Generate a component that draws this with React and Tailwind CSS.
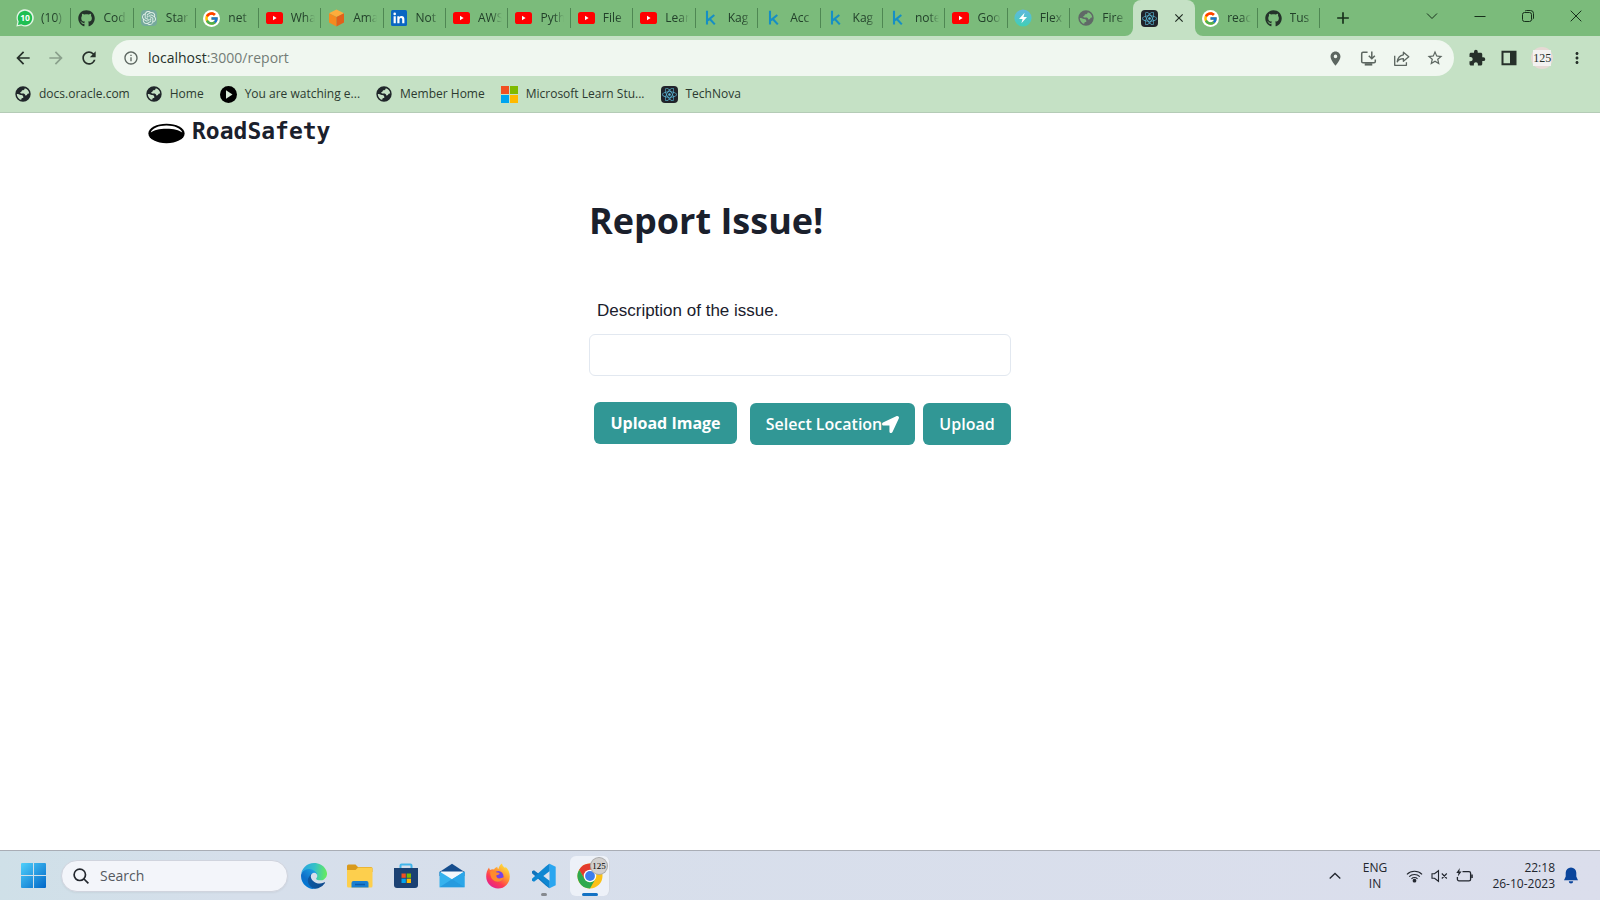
import React from "react";
import { FaGithub, FaLocationArrow, FaReact } from "react-icons/fa";
import { FcGoogle } from "react-icons/fc";
import { SiOpenai } from "react-icons/si";
import {
  MdArrowBack,
  MdArrowForward,
  MdRefresh,
  MdInfoOutline,
  MdPlace,
  MdStarBorder,
  MdExtension,
  MdMoreVert,
  MdAdd,
  MdClose,
} from "react-icons/md";

/* ---------- favicons ---------- */

function WhatsAppIcon() {
  return (
    <svg viewBox="0 0 18 18" className="size-[18px] shrink-0" aria-hidden="true">
      <path d="M.4 17.600 1.400 12.600A8.600 8.600 0 1 1 5.400 16.600Z" fill="#e4f5e6" />
      <path d="M1.900 16.100 2.700 12.600A7.200 7.200 0 1 1 5.400 15.300Z" fill="#1fbf52" />
      <text x="9" y="12.200" textAnchor="middle" fontSize="8.500" fontWeight="700" fill="#fff" fontFamily="Open Sans, sans-serif">10</text>
    </svg>
  );
}

function GoogleIcon() {
  return (
    <span className="flex size-[17px] items-center justify-center rounded-full bg-white">
      <FcGoogle className="size-[15px]" />
    </span>
  );
}

function OpenAiIcon() {
  return (
    <span className="flex size-4 items-center justify-center rounded-sm bg-[#75a99c]">
      <SiOpenai className="size-[14px] text-[#e3f0e8]" />
    </span>
  );
}

function YouTubeIcon() {
  return (
    <svg viewBox="0 0 17 12" className="h-3 w-[17px]" aria-hidden="true">
      <rect width="17" height="12" rx="2.6" fill="#f00" />
      <path d="M7 3.8v4.4L10.6 6z" fill="#fff" />
    </svg>
  );
}

function CubeIcon() {
  return (
    <svg viewBox="0 0 17 18" className="h-[18px] w-[17px]" aria-hidden="true">
      <path d="M8.5 .5 16 4.2 8.5 8 1 4.2Z" fill="#fdac3c" />
      <path d="M1 4.2 8.5 8v9.5L1 13.6Z" fill="#f58a1f" />
      <path d="M16 4.2 8.5 8v9.5L16 13.6Z" fill="#e2601a" />
    </svg>
  );
}

function LinkedInIcon() {
  return (
    <svg viewBox="0 0 16 16" className="size-4" aria-hidden="true">
      <rect width="16" height="16" rx="1.5" fill="#0a66c2" />
      <path d="M2.6 6.2h2.2v7H2.6zM3.7 2.6a1.3 1.3 0 1 1 0 2.6 1.3 1.3 0 0 1 0-2.6zM6.3 6.2h2.1v1c.4-.7 1.2-1.2 2.2-1.2 2.2 0 2.8 1.4 2.8 3.4v3.8h-2.2V9.7c0-.9-.2-1.8-1.3-1.8S8.500 8.800 8.500 9.700v3.500H6.300z" fill="#fff" />
    </svg>
  );
}

function KaggleIcon() {
  return (
    <svg viewBox="0 0 12 16" className="h-4 w-3" aria-hidden="true">
      <path d="M2 .8v13.600M9.300 5 2.700 10.400M4.600 8.800 9.800 14.400" fill="none" stroke="#168fc4" strokeWidth="2.100" />
    </svg>
  );
}

function BoltIcon() {
  return (
    <svg viewBox="0 0 18 18" className="size-[18px] shrink-0" aria-hidden="true">
      <defs>
        <linearGradient id="bolt" x1="0" y1="0" x2="0" y2="1">
          <stop offset="0" stopColor="#62b7e0" />
          <stop offset="1" stopColor="#3fd0b4" />
        </linearGradient>
      </defs>
      <circle cx="9" cy="9" r="8.600" fill="url(#bolt)" />
      <path d="M10.600 3.800 5 10h3.600L7.400 14.200 13 8H9.500Z" fill="#fff" />
    </svg>
  );
}

function ReactIcon() {
  return (
    <span className="flex size-[17px] items-center justify-center rounded-sm bg-[#20232a]">
      <FaReact className="size-[15px] text-[#58b5d3]" />
    </span>
  );
}

function Globe({ className }) {
  return (
    <svg viewBox="0 0 16 16" className={"size-4 shrink-0 " + className} aria-hidden="true">
      <path
        fillRule="evenodd"
        fill="currentColor"
        d="M8 .3a7.700 7.700 0 1 1 0 15.400A7.700 7.700 0 0 1 8 .3zM9.800 2.300C9.500 3.800 8.600 4.400 7 4.300c-.2 1.200-.6 1.700-1.900 1.900.3 1 1 1.400 2.500 1.200 1.500-.1 2.500.5 2.700 2 1.200.2 1.700-.1 2-1.100.3-.8.900-1 1.900-.7C14.100 5 12.400 3.100 9.800 2.300zM1.800 8.100c0 3 1.900 5.200 4.500 6-.2-1.200.1-1.800 1.300-2 .8-.2.900-1 .6-1.700-.5-1.200-1.500-1.100-2.500-1.300C4.700 8.900 4.100 8 3 8z"
      />
    </svg>
  );
}

const GitHubIcon = () => <FaGithub className="size-[17px] text-[#24332a]" />;
const GreyGlobe = () => <Globe className="text-[#606967]" />;
const DarkGlobe = () => <Globe className="text-[#20262a]" />;

const tabs = [
  [WhatsAppIcon, "(10)"],
  [GitHubIcon, "Cod"],
  [OpenAiIcon, "Star"],
  [GoogleIcon, "net"],
  [YouTubeIcon, "Wha"],
  [CubeIcon, "Ama"],
  [LinkedInIcon, "Not"],
  [YouTubeIcon, "AWS"],
  [YouTubeIcon, "Pyth"],
  [YouTubeIcon, "File"],
  [YouTubeIcon, "Lear"],
  [KaggleIcon, "Kag"],
  [KaggleIcon, "Acc"],
  [KaggleIcon, "Kag"],
  [KaggleIcon, "note"],
  [YouTubeIcon, "Goo"],
  [BoltIcon, "Flex"],
  [GreyGlobe, "Fire"],
  [ReactIcon, null],
  [GoogleIcon, "reac"],
  [GitHubIcon, "Tus"],
];

function Tab({ Icon, title, next }) {
  if (title === null) {
    return (
      <div role="tab" aria-selected="true" className="relative flex min-w-0 items-center justify-between rounded-t-lg bg-[#c5e1c5] px-2">
        <svg viewBox="0 0 8 8" className="absolute bottom-0 -left-2 size-2" aria-hidden="true">
          <path d="M8 0v8H0a8 8 0 0 0 8-8z" fill="#c5e1c5" />
        </svg>
        <svg viewBox="0 0 8 8" className="absolute -right-2 bottom-0 size-2" aria-hidden="true">
          <path d="M0 0v8h8a8 8 0 0 1-8-8z" fill="#c5e1c5" />
        </svg>
        <Icon />
        <button type="button" aria-label="Close tab" className="flex size-4 items-center justify-center text-[#1f2b22]">
          <MdClose className="size-[14px]" />
        </button>
      </div>
    );
  }
  const edge = next ? "border-transparent" : "border-[#4f8753]";
  return (
    <div role="tab" aria-selected="false" className="flex min-w-0 items-center">
      <div className={"flex h-5 w-full min-w-0 items-center gap-2 border-r pl-[7px] " + edge}>
        <span className="flex w-[17px] shrink-0 items-center justify-center"><Icon /></span>
        <span className="w-7 shrink-0 text-xs leading-5 whitespace-nowrap text-[#22402a] [mask-image:linear-gradient(to_right,black_14px,transparent_24px)]">
          {title}
        </span>
      </div>
    </div>
  );
}

function TabStrip() {
  return (
    <div className="flex h-9 bg-[#7bbb7b] pl-[9px]">
      <div role="tablist" className="grid min-w-0 flex-1 grid-cols-21">
        {tabs.map(([Icon, title], i) => (
          <Tab key={i} Icon={Icon} title={title} next={i + 1 < tabs.length && tabs[i + 1][1] === null} />
        ))}
      </div>
      <div className="flex w-[280px] items-center justify-between pr-[18px] pl-[11px] text-[#17301b]">
        <button type="button" aria-label="New tab" className="flex size-6 items-center justify-center">
          <MdAdd className="size-5" />
        </button>
        <div className="flex items-center gap-9 pb-1">
          <button type="button" aria-label="Search tabs">
            <svg viewBox="0 0 12 12" className="size-3" fill="none" stroke="currentColor" aria-hidden="true"><path d="m1 3.500 5 5 5-5" /></svg>
          </button>
          <button type="button" aria-label="Minimize">
            <svg viewBox="0 0 12 12" className="size-3" fill="none" stroke="currentColor" aria-hidden="true"><path d="M.5 6.500h11" /></svg>
          </button>
          <button type="button" aria-label="Restore">
            <svg viewBox="0 0 12 12" className="size-3" fill="none" stroke="currentColor" aria-hidden="true">
              <rect x=".5" y="2.500" width="9" height="9" rx="2" />
              <path d="M3 1.200C3.300.8 3.900.5 4.500.5H8.500a3 3 0 0 1 3 3V8c0 .6-.3 1-.7 1.300" />
            </svg>
          </button>
          <button type="button" aria-label="Close window">
            <svg viewBox="0 0 12 12" className="size-3" fill="none" stroke="currentColor" aria-hidden="true"><path d="m.7.7 10.600 10.600M11.300.7.7 11.300" /></svg>
          </button>
        </div>
      </div>
    </div>
  );
}

function Toolbar() {
  return (
    <div className="flex h-10 items-center pt-1 text-[#26302a]">
      <div className="flex w-28 items-center gap-[13px] pl-[13px]">
        <button type="button" aria-label="Back"><MdArrowBack className="size-5" /></button>
        <button type="button" aria-label="Forward"><MdArrowForward className="size-5 text-[#8aa08c]" /></button>
        <button type="button" aria-label="Reload"><MdRefresh className="size-5" /></button>
      </div>
      <div className="flex h-9 min-w-0 flex-1 items-center rounded-full bg-[#f0f7f0] pr-[10px] pl-[11px] text-[#5c6660]">
        <MdInfoOutline className="size-4" />
        <div className="relative ml-[9px] min-w-0 flex-1">
          <input
            aria-label="Address"
            defaultValue="localhost:3000/report"
            className="block w-full bg-transparent text-sm leading-6 text-transparent caret-[#26302a] outline-none"
          />
          <div aria-hidden="true" className="pointer-events-none absolute inset-0 text-sm leading-6 text-[#737c76]">
            <span className="text-[#26302a]">localhost</span>:3000/report
          </div>
        </div>
        <div className="flex items-center gap-4">
          <button type="button" aria-label="Location access"><MdPlace className="size-[17px]" /></button>
          <button type="button" aria-label="Install app">
            <svg viewBox="0 0 18 18" className="size-[17px]" fill="none" stroke="currentColor" strokeWidth="1.600" aria-hidden="true">
              <path d="M8 2.500H3.200a1.400 1.400 0 0 0-1.400 1.400v8.200a1.400 1.400 0 0 0 1.400 1.400h11.600a1.400 1.400 0 0 0 1.400-1.400V10M12.500 1.500v7.500M9.300 6l3.200 3.200L15.700 6" />
              <path d="M5 14h8v2.500H5z" fill="currentColor" stroke="none" />
            </svg>
          </button>
          <button type="button" aria-label="Share">
            <svg viewBox="0 0 18 18" className="size-[17px]" fill="none" stroke="currentColor" strokeWidth="1.400" strokeLinejoin="round" aria-hidden="true">
              <path d="M1.800 6v10.200h12.400V13" />
              <path d="M11 2.300 16.700 7.200 11 12V9.200c-3 0-5 1-6.500 3.300C5 8.500 7 5.600 11 5.100Z" />
            </svg>
          </button>
          <button type="button" aria-label="Bookmark this page"><MdStarBorder className="size-[18px]" /></button>
        </div>
      </div>
      <div className="flex w-[146px] items-center justify-between pr-[14px] pl-[14px]">
        <button type="button" aria-label="Extensions"><MdExtension className="size-[18px]" /></button>
        <button type="button" aria-label="Side panel">
          <svg viewBox="0 0 16 16" className="size-4" aria-hidden="true"><path d="M.5.8h15v14.400H.5zM2.500 2.800v10.400h6.500V2.800z" fill="currentColor" fillRule="evenodd" /></svg>
        </button>
        <button type="button" aria-label="Profile" className="flex size-[22px] items-center justify-center rounded-full bg-[#e6d9d4]">
          <span className="bg-[#f3f1f0] font-['Liberation_Serif',serif] text-xs leading-4">125</span>
        </button>
        <button type="button" aria-label="Menu"><MdMoreVert className="size-[18px]" /></button>
      </div>
    </div>
  );
}

function PlayIcon() {
  return (
    <svg viewBox="0 0 17 17" className="size-[17px]" aria-hidden="true">
      <circle cx="8.500" cy="8.500" r="8.500" fill="#000" />
      <path d="M6 4.300v8.400l6.500-4.200z" fill="#d7ead7" />
    </svg>
  );
}

function MicrosoftIcon() {
  return (
    <svg viewBox="0 0 17 17" className="size-[17px]" aria-hidden="true">
      <path d="M0 0h8v8H0z" fill="#f25022" />
      <path d="M9 0h8v8H9z" fill="#7fba00" />
      <path d="M0 9h8v8H0z" fill="#00a4ef" />
      <path d="M9 9h8v8H9z" fill="#ffb900" />
    </svg>
  );
}

const bookmarks = [
  [DarkGlobe, "docs.oracle.com"],
  [DarkGlobe, "Home"],
  [PlayIcon, "You are watching e..."],
  [DarkGlobe, "Member Home"],
  [MicrosoftIcon, "Microsoft Learn Stu..."],
  [ReactIcon, "TechNova"],
];

function BookmarksBar() {
  return (
    <nav aria-label="Bookmarks" className="flex h-9 items-center gap-4 pl-[15px] text-xs leading-5 text-[#2c3a30]">
      {bookmarks.map(([Icon, label], i) => (
        <a key={i} href="#" className="flex items-center gap-2 whitespace-nowrap"><Icon />{label}</a>
      ))}
    </nav>
  );
}

/* ---------- page ---------- */

function Page() {
  return (
    <div className="flex-1 bg-white text-[#1a202c]">
      <header className="flex items-center gap-[7px] pl-[148px]">
        <svg viewBox="0 0 38 22" className="mt-1 h-[22px] w-[37px]" aria-hidden="true">
          <ellipse cx="19" cy="11.500" rx="18.600" ry="10" fill="#000" />
          <path d="M2.800 10.500C4 6 11 3.200 19 3.200S34 6 35.200 10.500C32 8 26.500 6.600 19 6.600S6 8 2.800 10.500Z" fill="#fff" />
        </svg>
        <a href="#" className="font-['DejaVu_Sans_Mono',monospace] text-[23px] leading-9 font-bold">RoadSafety</a>
      </header>

      <main className="mx-auto w-[422px] pt-11">
        <h1 className="text-4xl leading-[56px] font-bold whitespace-nowrap">Report Issue!</h1>
        <form onSubmit={(e) => e.preventDefault()} className="pt-[50px]">
          <label htmlFor="description" className="block pl-2 font-['Liberation_Sans',sans-serif] text-[17px] leading-6">
            Description of the issue.
          </label>
          <input id="description" type="text" className="mt-[11px] block h-[42px] w-full rounded-md border border-[#e2e8f0] px-4 outline-none" />
          <div className="mt-[26px] flex items-start justify-between pl-[5px] text-white">
            <button type="button" className="h-[42px] w-[143px] rounded-md bg-[#319795] text-base font-bold whitespace-nowrap">Upload Image</button>
            <div className="flex gap-2 pt-px">
              <button type="button" className="flex h-[42px] w-[165px] items-center justify-center rounded-md bg-[#319795] text-base font-semibold whitespace-nowrap">
                Select Location
                <FaLocationArrow className="size-[17px]" />
              </button>
              <button type="submit" className="h-[42px] w-[88px] rounded-md bg-[#319795] text-base font-semibold">Upload</button>
            </div>
          </div>
        </form>
      </main>
    </div>
  );
}

/* ---------- taskbar ---------- */

function WindowsIcon() {
  return (
    <svg viewBox="0 0 24 24" className="size-[25px]" aria-hidden="true">
      <defs>
        <linearGradient id="win" x1="0" y1="0" x2="1" y2="1">
          <stop offset="0" stopColor="#4fd0fb" />
          <stop offset="1" stopColor="#0067c8" />
        </linearGradient>
      </defs>
      <path d="M1 0h10.500v11.500H0V1a1 1 0 0 1 1-1zM12.500 0H23a1 1 0 0 1 1 1v10.500H12.500zM0 12.500h11.500V24H1a1 1 0 0 1-1-1zM12.500 12.500H24V23a1 1 0 0 1-1 1H12.500z" fill="url(#win)" />
    </svg>
  );
}

function EdgeIcon() {
  return (
    <svg viewBox="0 0 256 256" className="size-[26px]" aria-hidden="true">
      <defs>
        <linearGradient id="edgeA" x1="63" y1="177" x2="241" y2="177" gradientUnits="userSpaceOnUse">
          <stop offset="0" stopColor="#0c59a4" />
          <stop offset="1" stopColor="#114a8b" />
        </linearGradient>
        <linearGradient id="edgeB" x1="157" y1="101" x2="46" y2="222" gradientUnits="userSpaceOnUse">
          <stop offset="0" stopColor="#1b9de2" />
          <stop offset=".7" stopColor="#0f6fc8" />
          <stop offset="1" stopColor="#0078d4" />
        </linearGradient>
        <linearGradient id="edgeC" x1="10" y1="90" x2="250" y2="110" gradientUnits="userSpaceOnUse">
          <stop offset="0" stopColor="#2aa5e0" />
          <stop offset=".5" stopColor="#35c1c8" />
          <stop offset="1" stopColor="#66eb5e" />
        </linearGradient>
      </defs>
      <path d="M231 190.500a93.700 93.700 0 0 1-10.500 4.700 101.900 101.900 0 0 1-35.900 6.500c-47.300 0-88.500-32.500-88.500-74.300a31.500 31.500 0 0 1 16.400-27.300c-42.800 1.800-53.800 46.400-53.800 72.500 0 73.900 68.100 81.400 82.800 81.400 7.900 0 19.800-2.300 27-4.600l1.300-.4a128.300 128.300 0 0 0 66.600-52.800 4 4 0 0 0-5.400-5.700z" fill="url(#edgeA)" />
      <path d="M105.700 241.400a79.200 79.200 0 0 1-22.700-21.300 80.700 80.700 0 0 1 29.500-120c3.200-1.500 8.500-4.100 15.600-4a32.400 32.400 0 0 1 25.700 13 31.900 31.900 0 0 1 6.300 18.700c0-.2 24.500-79.600-80-79.600-43.900 0-80 41.700-80 78.200a130.200 130.200 0 0 0 12.100 56 128 128 0 0 0 156.400 67 75.500 75.500 0 0 1-62.900-8z" fill="url(#edgeB)" />
      <path d="M152.300 148.900c-.9 1-3.400 2.500-3.400 5.600 0 2.600 1.700 5.200 4.800 7.300 14.400 10.100 41.600 8.700 41.700 8.700a59.600 59.600 0 0 0 30.300-8.300 61.400 61.400 0 0 0 30.400-52.900c.3-22.400-8-37.300-11.300-43.900C223.500 23.900 177.700 0 128 0A128 128 0 0 0 0 126.200c.5-36.500 36.800-66 80-66 3.500 0 23.500.3 42 10.100 16.300 8.500 24.900 18.900 30.800 29.200 6.200 10.700 7.300 24.100 7.300 29.500s-2.700 13.300-7.800 19.900z" fill="url(#edgeC)" />
    </svg>
  );
}

function FolderIcon() {
  return (
    <svg viewBox="0 0 26 24" className="h-6 w-[26px]" aria-hidden="true">
      <path d="M0 2a1.500 1.500 0 0 1 1.500-1.500h7L11 3h13a1.500 1.500 0 0 1 1.500 1.500V8H0z" fill="#d99a1c" />
      <path d="M0 6h8.500L11 3.500h13.500A1 1 0 0 1 25.500 4.500V22a1.500 1.500 0 0 1-1.500 1.500H1.500A1.500 1.500 0 0 1 0 22z" fill="#fdcf4d" />
      <path d="M4.500 23.500V19a2 2 0 0 1 2-2h13a2 2 0 0 1 2 2v4.500z" fill="#1a7fd0" />
      <path d="M8 20.500h10" stroke="#0d5ba8" strokeWidth="1.500" />
    </svg>
  );
}

function StoreIcon() {
  return (
    <svg viewBox="0 0 26 26" className="size-[26px]" aria-hidden="true">
      <path d="M7.500 6V2.500a1 1 0 0 1 1-1h9a1 1 0 0 1 1 1V6" fill="none" stroke="#42b5ea" strokeWidth="2" />
      <path d="M1 5h24V22a3 3 0 0 1-3 3H4a3 3 0 0 1-3-3z" fill="#1b4173" />
      <path d="M8.500 10.500h4.300v4.300H8.500z" fill="#f25022" />
      <path d="M13.700 10.500H18v4.300h-4.300z" fill="#7fba00" />
      <path d="M8.500 15.700h4.300V20H8.500z" fill="#00a4ef" />
      <path d="M13.700 15.700H18V20h-4.300z" fill="#ffb900" />
    </svg>
  );
}

function MailIcon() {
  return (
    <svg viewBox="0 0 26 25" className="h-[25px] w-[26px]" aria-hidden="true">
      <path d="M.5 9 13 .8 25.500 9v4H.5z" fill="#164d8d" />
      <path d="M2 8.500h22v5l-11 5-11-5z" fill="#f4f8fc" />
      <path d="M.5 8.500 13 16.300l12.500-7.800V24.200H.5z" fill="#36b2ee" />
      <path d="M13 16.300 25.500 8.500V24.200z" fill="#2ba6e8" />
      <path d="M13 16.300 .5 24.200h25z" fill="#1683cf" opacity=".5" />
    </svg>
  );
}

function FirefoxIcon() {
  return (
    <svg viewBox="0 0 26 26" className="size-[26px]" aria-hidden="true">
      <defs>
        <linearGradient id="fox" x1=".85" y1=".1" x2=".25" y2=".95">
          <stop offset="0" stopColor="#ffe03d" />
          <stop offset=".4" stopColor="#ff9330" />
          <stop offset=".7" stopColor="#ff3d4f" />
          <stop offset="1" stopColor="#e3228c" />
        </linearGradient>
      </defs>
      <path d="M24.800 13.500A11.800 11.800 0 0 1 1.200 13.800C1.200 9.800 2.200 7 4 4.500c.2 1 .5 1.800 1.100 2.500C6 6.300 7.500 6 9 6.400 9.800 5 11 4.200 12.500 3.800c-.4 1 .1 1.800.8 2.200.8-2.300 1.700-4.300 3.700-5.500.2 2 1.300 3 3.200 4.500.2-.3.300-.7.300-1.200 2.800 2.400 4.300 5.900 4.300 9.700z" fill="url(#fox)" />
      <circle cx="13.300" cy="13.200" r="5.200" fill="#7542e5" />
      <path d="M5.200 8.500c2-.8 4.600-.4 6.500 1 1.500.1 2.700.4 3 1.200-.5.900-2 1.200-3.300 1.600-.4 2 1 3.200 2.800 3.200 2 0 3-1.200 4.500-.9-1 3-3.400 4.300-6 4.200-4.500-.2-7.900-4-7.500-10.300z" fill="#ff8a2d" />
    </svg>
  );
}

function VsCodeIcon() {
  return (
    <svg viewBox="0 0 26 26" className="size-[26px]" aria-hidden="true">
      <path d="M18.500.8 8 11 3 7.200 1 8.300v2l14 12.500 3.500 2.400z" fill="#1173bb" />
      <path d="M18.500 25.200 8 15 3 18.800 1 17.700v-2L15 3.200 18.500.8z" fill="#0f87d2" />
      <path d="m18.500.8 6.200 3v18.400l-6.200 3z" fill="#2aa6f0" />
      <path d="M18.500 8.300v9.400L12.300 13z" fill="#dbe3ef" />
    </svg>
  );
}

function ChromeIcon() {
  return (
    <svg viewBox="0 0 26 26" className="size-[26px]" aria-hidden="true">
      <circle cx="13" cy="13" r="12.500" fill="#fbc116" />
      <path d="M2.170 6.750A12.500 12.500 0 0 1 23.830 6.750H13L7.500 16.100Z" fill="#e33b2e" />
      <path d="M2.170 6.750A12.500 12.500 0 0 0 13 25.500L18.400 16.100 13 19.200 7.600 16.100Z" fill="#2da94f" />
      <circle cx="13" cy="13" r="6.250" fill="#fff" />
      <circle cx="13" cy="13" r="4.900" fill="#3b7ded" />
    </svg>
  );
}

const apps = [
  ["Edge", EdgeIcon],
  ["File Explorer", FolderIcon],
  ["Microsoft Store", StoreIcon],
  ["Mail", MailIcon],
  ["Firefox", FirefoxIcon],
];

function Taskbar() {
  return (
    <footer className="flex h-[50px] items-center justify-between border-t border-[#a9adb5] bg-linear-to-r from-[#cfe0e8] via-[#d6dfeb] via-15% to-[#dbdeec] pr-[21px] pl-5">
      <div className="flex items-center">
        <button type="button" aria-label="Start" className="flex w-[26px] justify-center"><WindowsIcon /></button>
        <label className="ml-[15px] flex h-8 w-[227px] items-center gap-[11px] rounded-full border border-[#d0d4de] bg-[#f3f5fa] px-[11px] shadow-xs">
          <svg viewBox="0 0 16 16" className="size-4 shrink-0" fill="none" stroke="#23272e" strokeWidth="1.700" aria-hidden="true">
            <circle cx="6.800" cy="6.800" r="5.700" />
            <path d="m11 11 4.400 4.400" />
          </svg>
          <input type="search" aria-label="Search" placeholder="Search" className="w-full min-w-0 bg-transparent text-sm leading-5 outline-none placeholder:text-[#555960]" />
        </label>
        <div className="ml-[3px] flex items-center">
          {apps.map(([name, Icon]) => (
            <button key={name} type="button" aria-label={name} className="flex h-10 w-[46px] items-center justify-center"><Icon /></button>
          ))}
          <button type="button" aria-label="Visual Studio Code" className="relative flex h-10 w-[46px] items-center justify-center">
            <VsCodeIcon />
            <span className="absolute bottom-0 h-[3px] w-[6px] rounded-full bg-[#85898f]" />
          </button>
          <button type="button" aria-label="Google Chrome" className="relative ml-[3px] flex h-10 w-10 items-center justify-center rounded-md border-r border-[#d3d8e2] bg-[#edf1f8]">
            <ChromeIcon />
            <span className="absolute bottom-0 h-[3px] w-4 rounded-full bg-[#1271c4]" />
            <span className="absolute top-[2px] right-[2px] flex size-4 items-center justify-center rounded-full bg-[#d2d0cf] font-['Liberation_Serif',serif] text-[9px] leading-3 text-black ring-1 ring-[#a8a8a8]">125</span>
          </button>
        </div>
      </div>

      <div className="flex items-center text-xs leading-4 text-[#22262e]">
        <button type="button" aria-label="Show hidden icons">
          <svg viewBox="0 0 12 12" className="size-3" fill="none" stroke="currentColor" strokeWidth="1.300" aria-hidden="true"><path d="m.7 8.500 5.300-5 5.300 5" /></svg>
        </button>
        <div className="ml-[21px] w-[26px] text-center">ENG<br />IN</div>
        <div className="ml-[18px] flex items-center gap-2">
          <svg viewBox="0 0 18 16" className="h-4 w-[17px]" fill="none" stroke="currentColor" strokeWidth="1.200" aria-hidden="true">
            <path d="M1 6.300a11.300 11.300 0 0 1 16 0M3.400 8.700a8 8 0 0 1 11.200 0M5.800 11a4.600 4.600 0 0 1 6.400 0" />
            <circle cx="9" cy="13" r="1.400" fill="currentColor" />
          </svg>
          <svg viewBox="0 0 17 16" className="h-4 w-[17px]" fill="none" stroke="currentColor" strokeWidth="1.100" aria-hidden="true">
            <path d="M1 5.800h2.500L7.500 2.700v10.600L3.500 10.200H1zM10.800 5.500l5 5M15.800 5.500l-5 5" />
          </svg>
          <svg viewBox="0 0 17 16" className="h-4 w-[17px]" fill="none" stroke="currentColor" strokeWidth="1.300" aria-hidden="true">
            <path d="M6.500 3.700H13A1.600 1.600 0 0 1 14.600 5.300v5.900A1.600 1.600 0 0 1 13 12.800H3A1.600 1.600 0 0 1 1.400 11.200V9" />
            <path d="M16 6.500v3.500" strokeWidth="1.600" />
            <path d="M3.800 0 .3 5h2.200L1.800 8.500 5.600 3.500H3.300z" fill="currentColor" stroke="none" />
          </svg>
        </div>
        <div className="w-[82px] text-right whitespace-nowrap">22:18<br />26-10-2023</div>
        <button type="button" aria-label="Notifications" className="ml-2">
          <svg viewBox="0 0 16 17" className="h-[17px] w-4" fill="#0a459c" aria-hidden="true">
            <path d="M8 .5a5.300 5.300 0 0 0-5.300 5.300v3.700L1 13.300h14l-1.700-3.800V5.800A5.300 5.300 0 0 0 8 .5zM5.800 14.300h4.400a2.200 2.200 0 0 1-4.400 0z" />
          </svg>
        </button>
      </div>
    </footer>
  );
}

export default function App() {
  return (
    <div className="flex min-h-screen flex-col overflow-hidden font-['Open_Sans',sans-serif]">
      <TabStrip />
      <div className="border-b border-[#b4cbb6] bg-[#c5e1c5]">
        <Toolbar />
        <BookmarksBar />
      </div>
      <Page />
      <Taskbar />
    </div>
  );
}
